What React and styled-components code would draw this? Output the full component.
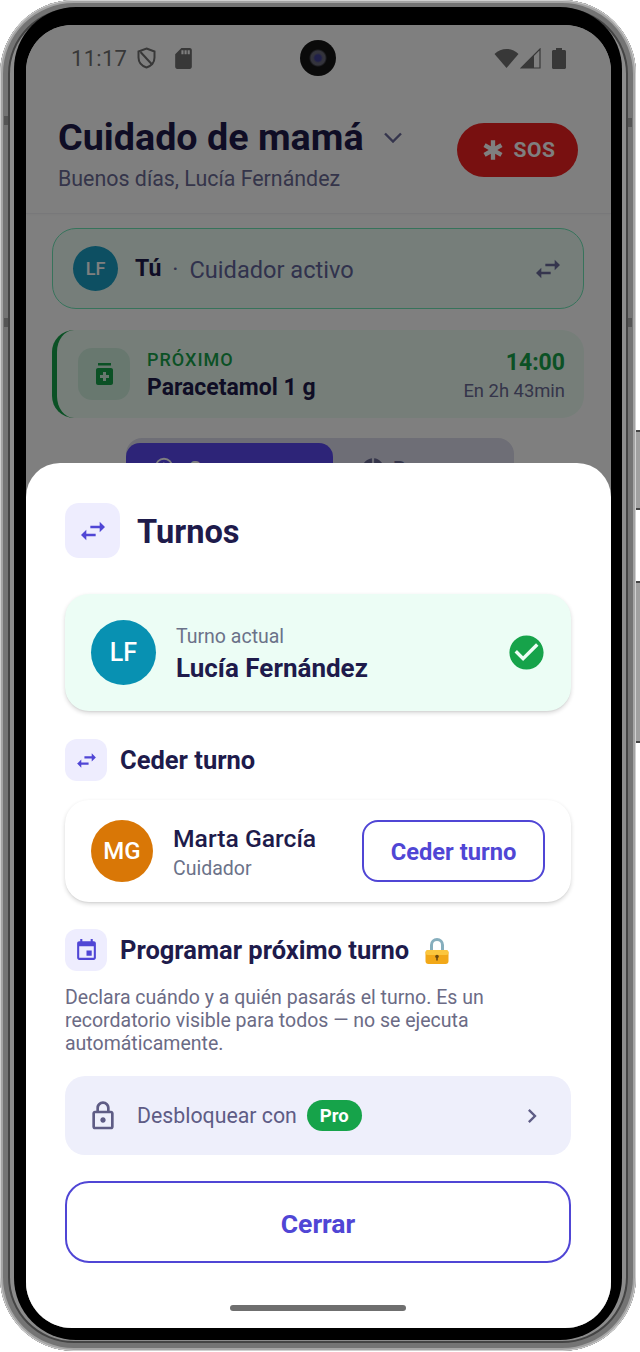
import styled, { createGlobalStyle } from "styled-components";

const GlobalStyle = createGlobalStyle`
  html, body { margin: 0; padding: 0; background: #fff; }
  body { font-family: "Roboto", "Liberation Sans", sans-serif; }
  * { box-sizing: border-box; }
`

const Page = styled.div`
  position: relative;
  width: 640px;
  height: 1352px;
  overflow: hidden;
`
const SideButton = styled.div`
  position: absolute;
  right: 0;
  top: ${(p) => p.$top}px;
  width: 4px;
  height: ${(p) => p.$height}px;
  background: #a0a0a0;
  border-top: 2px solid #444;
  border-bottom: 2px solid #444;
`
const AntennaBand = styled.div`
  position: absolute;
  left: ${(p) => p.$left}px;
  top: ${(p) => p.$top}px;
  width: 4px;
  height: 9px;
  background: #555;
`
const Device = styled.div`
  width: 636px;
  height: 1351px;
  border-radius: 74px;
  padding: 7px 14px 11px 14px;
  background: #8c8c8c;
  box-shadow: inset 0 0 0 1px #d0d0d0, inset 0 0 0 3px #a4a4a4, inset 0 0 0 8px #747474, inset 0 0 0 10px #444;
`
const Bezel = styled.div`
  height: 100%;
  background: #000;
  border-radius: 62px;
  padding: 18px 11px 12px 12px;
`
const Screen = styled.div`
  position: relative;
  width: 585px;
  height: 1303px;
  border-radius: 46px;
  overflow: hidden;
  background: #ffffff;
  display: flex;
  flex-direction: column;
`
const StatusBar = styled.div`
  height: 66px;
  flex: none;
  display: flex;
  align-items: center;
  justify-content: space-between;
  padding: 0 45px;
`
const StatusGroup = styled.div`
  display: flex;
  align-items: center;
`
const StatusGap = styled.span`
  width: ${(p) => p.$width}px;
`
const Time = styled.span`
  font-size: 22px;
  letter-spacing: 0.3px;
  color: #707070;
`
const Camera = styled.div`
  position: absolute;
  left: 274px;
  top: 15px;
  width: 36px;
  height: 36px;
  border-radius: 50%;
  background: radial-gradient(circle at 50% 50%, #20204a 0 3px, #34343c 5px 7px, #0a0a0a 9px);
  z-index: 3;
`
const Header = styled.header`
  flex: none;
  height: 123px;
  padding: 25px 33px 0 32px;
  display: flex;
  justify-content: space-between;
  border-bottom: 1px solid #f0f0f4;
  box-shadow: 0 1px 3px rgba(0, 0, 0, 0.03);
`
const HeaderText = styled.div`
  display: flex;
  flex-direction: column;
`
const TitleRow = styled.div`
  display: flex;
  align-items: center;
  gap: 20px;
`
const AppTitle = styled.h1`
  margin: 0;
  font-size: 37.7px;
  line-height: 42px;
  font-weight: 700;
  color: #1e1b4b;
`
const Greeting = styled.p`
  margin: 8px 0 0;
  font-size: 21.4px;
  line-height: 26px;
  color: #6a6a95;
`
const SosButton = styled.button`
  margin-top: 7px;
  width: 121px;
  height: 54px;
  border: 0;
  border-radius: 27px;
  background: #f02020;
  color: #fff;
  font: 700 21px "Roboto", sans-serif;
  letter-spacing: 0.5px;
  display: flex;
  align-items: center;
  justify-content: center;
  gap: 8px;
`
const Content = styled.div`
  flex: none;
  padding: 14px 27px 0 26px;
  display: flex;
  flex-direction: column;
`
const ActiveRow = styled.div`
  height: 81px;
  display: flex;
  align-items: center;
  padding: 0 19px 0 20px;
  border-radius: 24px;
  background: #ecfdf5;
  border: 1.5px solid #6ee7b7;
  color: #62659a;
  font-size: 23.6px;
`
const Avatar = styled.div`
  flex: none;
  width: ${(p) => p.$size}px;
  height: ${(p) => p.$size}px;
  border-radius: 50%;
  background: ${(p) => p.$color};
  color: #fff;
  font-size: ${(p) => p.$font}px;
  font-weight: 500;
  display: flex;
  align-items: center;
  justify-content: center;
`
const You = styled.strong`
  margin-left: 17px;
  font-size: 23px;
  font-weight: 700;
  color: #1e1b4b;
`
const Dot = styled.span`
  margin: 0 11px;
`
const ActiveLabel = styled.span`
  padding-top: 2px;
`
const Spacer = styled.div`
  flex: 1;
`
const NextCard = styled.div`
  margin-top: 21px;
  height: 88px;
  display: flex;
  align-items: center;
  padding: 0 19px 0 21px;
  border-radius: 22px;
  border-left: 5px solid #16a34a;
  background: #ecfdf3;
`
const PillBox = styled.div`
  width: 52px;
  height: 52px;
  border-radius: 14px;
  background: #d1f0df;
  display: flex;
  align-items: center;
  justify-content: center;
`
const NextText = styled.div`
  margin-left: 17px;
  padding-top: 4px;
  flex: 1;
`
const NextLabel = styled.div`
  font-size: 18px;
  line-height: 22px;
  font-weight: 500;
  letter-spacing: 1px;
  color: #16a34a;
`
const NextName = styled.div`
  margin-top: 2px;
  font-size: 23px;
  line-height: 30px;
  font-weight: 700;
  color: #1e1b4b;
`
const NextTime = styled.div`
  padding-top: 4px;
  text-align: right;
`
const Clock = styled.div`
  font-size: 23px;
  line-height: 28px;
  font-weight: 700;
  color: #16a34a;
`
const Until = styled.div`
  margin-top: 1px;
  font-size: 18.4px;
  line-height: 26px;
  color: #6a6a95;
`
const Tabs = styled.div`
  margin: 20px 70px 0 74px;
  height: 70px;
  border-radius: 16px;
  background: #dcdcec;
  padding: 5px 0 0;
  display: flex;
`
const Tab = styled.div`
  width: ${(p) => p.$width}px;
  height: 60px;
  border-radius: 14px;
  padding: 13px 0 0 27px;
  display: flex;
  gap: ${(p) => p.$gap}px;
  background: ${(p) => (p.$active ? "#5a48f0" : "transparent")};
  color: ${(p) => (p.$active ? "#fff" : "#6a6a95")};
  font-size: 20px;
  line-height: 26px;
  font-weight: 500;
`
const Scrim = styled.div`
  position: absolute;
  inset: 0;
  background: rgba(0, 0, 0, 0.5);
`
const Sheet = styled.section`
  position: absolute;
  left: 0;
  right: 0;
  bottom: 0;
  height: 865px;
  background: #fff;
  border-radius: 34px 34px 0 0;
  padding: 40px 40px 0 39px;
  display: flex;
  flex-direction: column;
  z-index: 2;
`
const SheetHeader = styled.div`
  display: flex;
  align-items: center;
  gap: 17px;
`
const IconBox = styled.div`
  flex: none;
  width: ${(p) => p.$size}px;
  height: ${(p) => p.$size}px;
  border-radius: ${(p) => p.$radius}px;
  background: #eeedfe;
  display: flex;
  align-items: center;
  justify-content: center;
`
const SheetTitle = styled.h2`
  margin: 2px 0 0;
  font-size: 32.6px;
  font-weight: 700;
  color: #1e1b4b;
`
const CurrentCard = styled.div`
  margin-top: 36px;
  height: 117px;
  flex: none;
  display: flex;
  align-items: center;
  padding: 0 24px 0 26px;
  border-radius: 24px;
  background: #ecfdf5;
  box-shadow: 0 2px 4px rgba(0, 0, 0, 0.16), 0 1px 1px rgba(0, 0, 0, 0.04);
`
const PersonText = styled.div`
  flex: 1;
  margin-left: 20px;
  padding-top: ${(p) => p.$pad}px;
`
const SmallLabel = styled.div`
  font-size: 19.5px;
  line-height: 26px;
  color: #6b7289;
`
const PersonName = styled.div`
  margin-top: ${(p) => p.$top}px;
  font-size: ${(p) => p.$size}px;
  line-height: 34px;
  font-weight: ${(p) => p.$weight};
  color: #1e1b4b;
`
const SectionRow = styled.div`
  margin-top: ${(p) => p.$top}px;
  flex: none;
  display: flex;
  align-items: center;
  gap: 13px;
`
const SectionTitle = styled.h3`
  margin: 0;
  font-size: 25.5px;
  font-weight: 700;
  color: #1e1b4b;
`
const LockEmoji = styled.svg`
  margin-left: 3px;
`
const PersonCard = styled.div`
  margin-top: 19px;
  height: 102px;
  flex: none;
  display: flex;
  align-items: center;
  padding: 0 26px;
  border-radius: 24px;
  background: #fff;
  box-shadow: 0 2px 4px rgba(0, 0, 0, 0.16), 0 1px 1px rgba(0, 0, 0, 0.04);
`
const OutlineButton = styled.button`
  width: ${(p) => p.$width};
  height: ${(p) => p.$height}px;
  flex: none;
  padding: 2px 0 0;
  background: #fff;
  border: 2.5px solid #5046d5;
  border-radius: ${(p) => p.$radius}px;
  color: #5046d5;
  font: 700 ${(p) => p.$font}px "Roboto", sans-serif;
`
const Description = styled.p`
  margin: 15px 0 0;
  font-size: 19.5px;
  line-height: 23px;
  color: #6b6b85;
`
const UnlockRow = styled.div`
  margin-top: 21px;
  height: 79px;
  flex: none;
  display: flex;
  align-items: center;
  padding: 0 25px 0 22px;
  border-radius: 20px;
  background: #eeeffb;
  color: #5e5c85;
  font-size: 21.3px;
`
const UnlockText = styled.span`
  margin-left: 18px;
`
const ProBadge = styled.span`
  margin-left: 10px;
  padding: 0 13px;
  height: 31px;
  border-radius: 16px;
  background: #16a34a;
  color: #fff;
  font-size: 18.5px;
  font-weight: 700;
  display: flex;
  align-items: center;
`
const CloseWrap = styled.div`
  margin-top: 26px;
  display: flex;
`
const HomeBar = styled.div`
  align-self: center;
  margin-top: 42px;
  width: 176px;
  height: 6px;
  border-radius: 3px;
  background: #6f6f6f;
`

const Icon = ({ d, size, color }) => (
  <svg width={size} height={size} viewBox="0 0 24 24" fill={color}>
    <path d={d} />
  </svg>
);

const SWAP = "M6.99 11L3 15l3.99 4v-3H14v-2H6.99v-3zM21 9l-3.99-4v3H10v2h7.01v3L21 9z";
const EVENT = "M17 12h-5v5h5v-5zM16 1v2H8V1H6v2H5c-1.11 0-1.99.9-1.99 2L3 19c0 1.1.89 2 2 2h14c1.1 0 2-.9 2-2V5c0-1.1-.9-2-2-2h-1V1h-2zm3 18H5V8h14v11z";
const LOCK = "M18 8h-1V6c0-2.76-2.24-5-5-5S7 3.24 7 6v2H6c-1.1 0-2 .9-2 2v10c0 1.1.9 2 2 2h12c1.1 0 2-.9 2-2V10c0-1.1-.9-2-2-2zM9 6c0-1.66 1.34-3 3-3s3 1.34 3 3v2H9V6zm9 14H6V10h12v10zm-6-3c1.1 0 2-.9 2-2s-.9-2-2-2-2 .9-2 2 .9 2 2 2z";
const CHEVRON_RIGHT = "M10 6L8.59 7.41 13.17 12l-4.58 4.59L10 18l6-6z";
const CHECK = "M12 2C6.48 2 2 6.48 2 12s4.48 10 10 10 10-4.48 10-10S17.52 2 12 2zm-2 15l-5-5 1.41-1.41L10 14.17l7.59-7.59L19 8l-9 9z";
const EMERGENCY = "M20.79 9.23l-2-3.46L14 8.54V3h-4v5.54L5.21 5.77l-2 3.46L8 12l-4.79 2.77 2 3.46L10 15.46V21h4v-5.54l4.79 2.77 2-3.46L16 12l4.79-2.77z";
const SD_CARD = "M18 2h-8L4.02 8 4 20c0 1.1.9 2 2 2h12c1.1 0 2-.9 2-2V4c0-1.1-.9-2-2-2zm-6 6h-2V4h2v4zm3 0h-2V4h2v4zm3 0h-2V4h2v4z";
const PIE = "M11 2v20c-5.07-.5-9-4.79-9-10s3.93-9.5 9-10zm2.03 0v8.99H22c-.47-4.74-4.24-8.52-8.97-8.99zm0 11.01V22c4.74-.47 8.5-4.25 8.97-8.99h-8.97z";
const CLOCK = "M12 2a10 10 0 100 20 10 10 0 000-20zm0 18a8 8 0 110-16 8 8 0 010 16zm.5-13H11v6l5.2 3.2.8-1.3-4.5-2.7V7z";

const ShieldOff = () => (
  <svg width="19" height="22" viewBox="0 0 19 22" fill="none" stroke="#707070" strokeWidth="2">
    <path d="M9.5 1.5l8 3v6c0 4.8-3.300 8.400-8 10-4.700-1.600-8-5.200-8-10v-6z" />
    <path d="M3.500 5l12 13" />
  </svg>
);

const Wifi = () => (
  <svg width="25" height="20" viewBox="0 0 25 20" fill="#707070">
    <path d="M12.500 20L0.500 6C4 2.500 8 1 12.500 1s8.500 1.500 12 5z" />
  </svg>
);

const Signal = () => (
  <svg width="21" height="21" viewBox="0 0 21 21" fill="none">
    <path d="M20 1v19H1z" stroke="#707070" strokeWidth="1.200" />
    <path d="M14 7v13H1z" fill="#707070" />
  </svg>
);

const Battery = () => (
  <svg width="14" height="21" viewBox="0 0 14 21" fill="#707070">
    <path d="M4 0h6v2h2.500c.8 0 1.500.7 1.500 1.500v16c0 .8-.7 1.500-1.500 1.500h-11C.7 21 0 20.300 0 19.500v-16C0 2.700.7 2 1.500 2H4z" />
  </svg>
);

const ChevronDown = () => (
  <svg width="18" height="11" viewBox="0 0 18 11" fill="none" stroke="#6a6a9a" strokeWidth="2.400">
    <path d="M1 1.500l8 8 8-8" />
  </svg>
);

const MedicineJar = () => (
  <svg width="17" height="22" viewBox="0 0 17 22" fill="#16a34a">
    <path d="M2 0h13v2.500H2z" />
    <path
      fillRule="evenodd"
      d="M2 5h13c1.100 0 2 .9 2 2v13c0 1.100-.9 2-2 2H2c-1.100 0-2-.9-2-2V7c0-1.100.9-2 2-2zm5 4v3H4v3h3v3h3v-3h3v-3h-3V9z"
    />
  </svg>
);

const GoldLock = () => (
  <LockEmoji width="24" height="27" viewBox="0 0 24 27">
    <path d="M5 14V8a7 7 0 0114 0v6h-3V8a4 4 0 00-8 0v6z" fill="#86aebd" />
    <rect x="0.500" y="13" width="23" height="14" rx="3" fill="#f2a818" />
    <rect x="0.500" y="13" width="23" height="5" rx="2.500" fill="#fbc63e" />
    <circle cx="12" cy="19.500" r="1.800" fill="#6b4a10" />
    <rect x="11.200" y="20" width="1.600" height="3.500" fill="#6b4a10" />
  </LockEmoji>
);

export default function App() {
  return (
    <Page>
      <GlobalStyle />
      <SideButton $top={430} $height={80} />
      <SideButton $top={581} $height={162} />
      <Device>
        <AntennaBand $left={4} $top={116} />
        <AntennaBand $left={4} $top={318} />
        <AntennaBand $left={628} $top={118} />
        <AntennaBand $left={628} $top={318} />
        <Bezel>
          <Screen>
            <Camera />
            <StatusBar>
              <StatusGroup>
                <Time>11:17</Time>
                <StatusGap $width={10} />
                <ShieldOff />
                <StatusGap $width={15} />
                <Icon d={SD_CARD} size={25} color="#707070" />
              </StatusGroup>
              <StatusGroup>
                <Wifi />
                <StatusGap $width={1} />
                <Signal />
                <StatusGap $width={11} />
                <Battery />
              </StatusGroup>
            </StatusBar>
            <Header>
              <HeaderText>
                <TitleRow>
                  <AppTitle>Cuidado de mamá</AppTitle>
                  <ChevronDown />
                </TitleRow>
                <Greeting>Buenos días, Lucía Fernández</Greeting>
              </HeaderText>
              <SosButton>
                <Icon d={EMERGENCY} size={26} color="#fff" />
                SOS
              </SosButton>
            </Header>
            <Content>
              <ActiveRow>
                <Avatar $size={45} $color="#1a9fc4" $font={18}>LF</Avatar>
                <You>Tú</You>
                <Dot>·</Dot>
                <ActiveLabel>Cuidador activo</ActiveLabel>
                <Spacer />
                <Icon d={SWAP} size={32} color="#6a6a9a" />
              </ActiveRow>
              <NextCard>
                <PillBox>
                  <MedicineJar />
                </PillBox>
                <NextText>
                  <NextLabel>PRÓXIMO</NextLabel>
                  <NextName>Paracetamol 1 g</NextName>
                </NextText>
                <NextTime>
                  <Clock>14:00</Clock>
                  <Until>En 2h 43min</Until>
                </NextTime>
              </NextCard>
              <Tabs>
                <Tab $active $width={207} $gap={14}>
                  <Icon d={CLOCK} size={22} color="#fff" />
                  Semana
                </Tab>
                <Tab $width={180} $gap={7}>
                  <Icon d={PIE} size={26} color="#6a6a95" />
                  Resumen
                </Tab>
              </Tabs>
            </Content>
            <Scrim />
            <Sheet>
              <SheetHeader>
                <IconBox $size={55} $radius={14}>
                  <Icon d={SWAP} size={32} color="#5046d5" />
                </IconBox>
                <SheetTitle>Turnos</SheetTitle>
              </SheetHeader>
              <CurrentCard>
                <Avatar $size={65} $color="#0891b2" $font={25}>LF</Avatar>
                <PersonText $pad={4}>
                  <SmallLabel>Turno actual</SmallLabel>
                  <PersonName $top={1} $size={26} $weight={700}>Lucía Fernández</PersonName>
                </PersonText>
                <Icon d={CHECK} size={41} color="#16a34a" />
              </CurrentCard>
              <SectionRow $top={28}>
                <IconBox $size={42} $radius={12}>
                  <Icon d={SWAP} size={25} color="#5046d5" />
                </IconBox>
                <SectionTitle>Ceder turno</SectionTitle>
              </SectionRow>
              <PersonCard>
                <Avatar $size={62} $color="#d97706" $font={24}>MG</Avatar>
                <PersonText $pad={2}>
                  <PersonName $top={0} $size={24.7} $weight={500}>Marta García</PersonName>
                  <SmallLabel>Cuidador</SmallLabel>
                </PersonText>
                <OutlineButton $width="183px" $height={62} $radius={16} $font={23.7}>Ceder turno</OutlineButton>
              </PersonCard>
              <SectionRow $top={27}>
                <IconBox $size={42} $radius={12}>
                  <Icon d={EVENT} size={25} color="#5046d5" />
                </IconBox>
                <SectionTitle>Programar próximo turno</SectionTitle>
                <GoldLock />
              </SectionRow>
              <Description>
                Declara cuándo y a quién pasarás el turno. Es un recordatorio visible para todos — no se ejecuta automáticamente.
              </Description>
              <UnlockRow>
                <Icon d={LOCK} size={32} color="#5e5c85" />
                <UnlockText>Desbloquear con</UnlockText>
                <ProBadge>Pro</ProBadge>
                <Spacer />
                <Icon d={CHEVRON_RIGHT} size={28} color="#5e5c85" />
              </UnlockRow>
              <CloseWrap>
                <OutlineButton $width="100%" $height={82} $radius={24} $font={26.5}>Cerrar</OutlineButton>
              </CloseWrap>
              <HomeBar />
            </Sheet>
          </Screen>
        </Bezel>
      </Device>
    </Page>
  );
}
